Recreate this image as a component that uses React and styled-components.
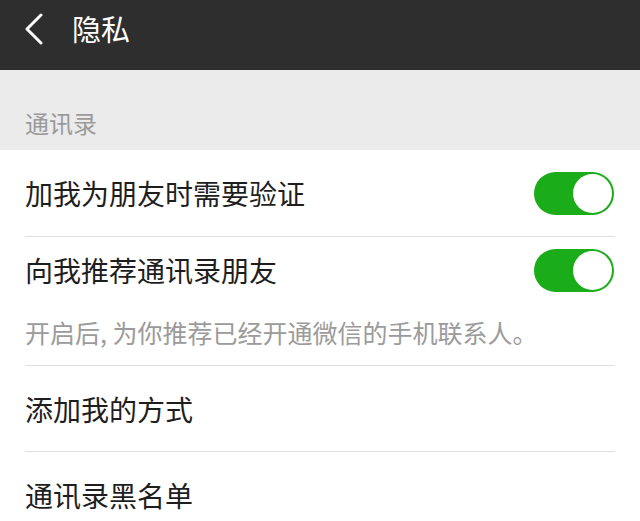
import React from "react";
import styled, { createGlobalStyle } from "styled-components";

const GlobalStyle = createGlobalStyle`
  html, body {
    margin: 0;
    padding: 0;
    background: #ffffff;
    font-family: "Noto Sans CJK SC", "Noto Sans", sans-serif;
  }
`;

const Page = styled.div`
  width: 640px;
  height: 521px;
  overflow: hidden;
  background: #ffffff;
`;

const Header = styled.div`
  height: 70px;
  background: #2e2e2e;
  display: flex;
  align-items: center;
  padding: 0 0 12px 24px;
  gap: 28px;
  box-sizing: border-box;
`;

const Title = styled.h1`
  margin: 0;
  font-size: 29px;
  font-weight: 400;
  color: #ffffff;
  line-height: 1;
  padding-bottom: 2px;
`;

const SectionHead = styled.div`
  height: 80px;
  background: #ebebeb;
  display: flex;
  align-items: flex-end;
  padding: 0 25px 10px;
  box-sizing: border-box;
  font-size: 24px;
  color: #9a9a9a;
`;

const Row = styled.div`
  height: ${(p) => p.h}px;
  display: flex;
  align-items: center;
  justify-content: space-between;
  padding: 0 25px;
  box-sizing: border-box;
  font-size: 28px;
  color: #1e1e1e;
`;

const Hint = styled.div`
  height: 62px;
  padding: 0 25px 4px;
  box-sizing: border-box;
  display: flex;
  align-items: center;
  font-size: 25px;
  color: #9b9b9b;
`;

const Divider = styled.div`
  height: 1px;
  background: #e0e0e0;
  margin: 0 25px;
`;

const Toggle = styled.div`
  width: 80px;
  height: 43px;
  border-radius: 22px;
  background: #1aad19;
  display: flex;
  align-items: center;
  justify-content: flex-end;
  padding: 0 2px;
  box-sizing: border-box;
  margin-right: 1px;
`;

const Knob = styled.div`
  width: 39px;
  height: 39px;
  border-radius: 50%;
  background: #ffffff;
`;

const BackIcon = () => (
  <svg width="20" height="32" viewBox="0 0 20 32">
    <polyline
      points="17,2 3,16 17,30"
      fill="none"
      stroke="#ffffff"
      strokeWidth="3"
      strokeLinecap="round"
      strokeLinejoin="round"
    />
  </svg>
);

const Switch = () => (
  <Toggle>
    <Knob />
  </Toggle>
);

export default function App() {
  return (
    <Page>
      <GlobalStyle />
      <Header>
        <BackIcon />
        <Title>隐私</Title>
      </Header>
      <SectionHead>通讯录</SectionHead>
      <Row h={86}>
        <span>加我为朋友时需要验证</span>
        <Switch />
      </Row>
      <Divider />
      <Row h={66}>
        <span>向我推荐通讯录朋友</span>
        <Switch />
      </Row>
      <Hint>开启后, 为你推荐已经开通微信的手机联系人。</Hint>
      <Divider />
      <Row h={85}>
        <span>添加我的方式</span>
      </Row>
      <Divider />
      <Row h={85}>
        <span>通讯录黑名单</span>
      </Row>
    </Page>
  );
}
